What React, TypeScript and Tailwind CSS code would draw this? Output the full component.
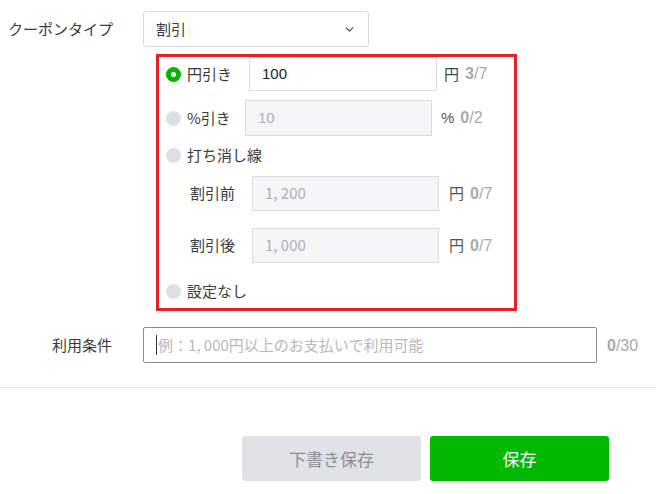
import { ChevronDown } from 'lucide-react'

const font = { fontFamily: '"Noto Sans CJK JP", "Liberation Sans", sans-serif' }

function Radio({ checked }: { checked?: boolean }) {
    if (checked) {
        return <span className="w-[15px] h-[15px] rounded-full border-[5px] border-[#06b400] bg-white shrink-0" />
    }
    return <span className="w-[15px] h-[15px] rounded-full bg-[#dcdfe4] shrink-0" />
}

function Count({ n, max }: { n: number; max: number }) {
    return (
        <span className="text-[#a9a9a9] text-[16px] font-['Liberation_Sans']">
            <span className="font-bold">{n}</span>/{max}
        </span>
    )
}

export default function App() {
    return (
        <div className="w-[656px] h-[494px] bg-white text-[#3a3a3a] overflow-hidden" style={font}>
            {/* coupon type */}
            <div className="flex items-center pt-[11px] h-[47px]">
                <div className="w-[143px] pl-[8px] text-[15px]">クーポンタイプ</div>
                <div className="w-[226px] h-[36px] border border-[#d9d9d9] rounded-[3px] flex items-center justify-between pl-[12px] pr-[12px] text-[15px]">
                    <span>割引</span>
                    <ChevronDown size={13} strokeWidth={2.5} className="text-[#555]" />
                </div>
            </div>

            {/* discount options */}
            <div className="ml-[156px] mt-[7px] w-[361px] border-[3px] border-[#e5212b] pl-[7px] pb-[5px] text-[15px]">
                <div className="flex items-center h-[34px]">
                    <div className="w-[83px] flex items-center gap-[6px]">
                        <Radio checked />
                        <span>円引き</span>
                    </div>
                    <div className="w-[188px] h-[34px] border border-[#dcdcdc] bg-white flex items-center pl-[12px] text-[15px] text-[#222] font-['Liberation_Sans']">100</div>
                    <span className="ml-[7px] mr-[6px] text-[#444]">円</span>
                    <Count n={3} max={7} />
                </div>

                <div className="flex items-center h-[36px] mt-[9px]">
                    <div className="w-[79px] flex items-center gap-[6px]">
                        <Radio />
                        <span>%引き</span>
                    </div>
                    <div className="w-[187px] h-[36px] border border-[#dcdcdc] bg-[#f5f6f8] flex items-center pl-[12px] text-[15px] text-[#b0b0b0] font-['Liberation_Sans']">10</div>
                    <span className="ml-[9px] mr-[6px] text-[#555] font-['Liberation_Sans']">%</span>
                    <Count n={0} max={2} />
                </div>

                <div className="flex items-center h-[24px] mt-[7px] gap-[6px]">
                    <Radio />
                    <span>打ち消し線</span>
                </div>

                <div className="flex items-center h-[35px] mt-[9px] pl-[24px]">
                    <span className="w-[62px]">割引前</span>
                    <div className="w-[187px] h-[35px] border border-[#dcdcdc] bg-[#f5f6f8] flex items-center pl-[12px] text-[15px] text-[#b0b0b0]">1, 200</div>
                    <span className="ml-[10px] mr-[6px] text-[#555]">円</span>
                    <Count n={0} max={7} />
                </div>

                <div className="flex items-center h-[35px] mt-[17px] pl-[24px]">
                    <span className="w-[62px]">割引後</span>
                    <div className="w-[187px] h-[35px] border border-[#dcdcdc] bg-[#f5f6f8] flex items-center pl-[12px] text-[15px] text-[#b0b0b0]">1, 000</div>
                    <span className="ml-[10px] mr-[6px] text-[#555]">円</span>
                    <Count n={0} max={7} />
                </div>

                <div className="flex items-center h-[24px] mt-[16px] gap-[6px]">
                    <Radio />
                    <span>設定なし</span>
                </div>
            </div>

            {/* conditions */}
            <div className="flex items-center mt-[16px] h-[36px]">
                <div className="w-[143px] pl-[52px] text-[15px]">利用条件</div>
                <div className="w-[454px] h-[36px] border border-[#8c8c8c] rounded-[2px] flex items-center pl-[12px] text-[15px] text-[#b8b8b8]">
                    <span className="w-px h-[20px] bg-[#333] mr-[1px]" />
                    例：1, 000円以上のお支払いで利用可能
                </div>
                <span className="ml-[10px]"><Count n={0} max={30} /></span>
            </div>

            <div className="mt-[24px] border-t border-[#e6e6e6]" />

            {/* buttons */}
            <div className="flex pl-[242px] gap-[9px] mt-[48px]">
                <button className="w-[179px] h-[45px] rounded-[3px] bg-[#dfe3e8] text-[#8a8f96] text-[17px]">下書き保存</button>
                <button className="w-[179px] h-[45px] rounded-[3px] bg-[#00b900] text-white text-[17px]">保存</button>
            </div>
        </div>
    )
}
